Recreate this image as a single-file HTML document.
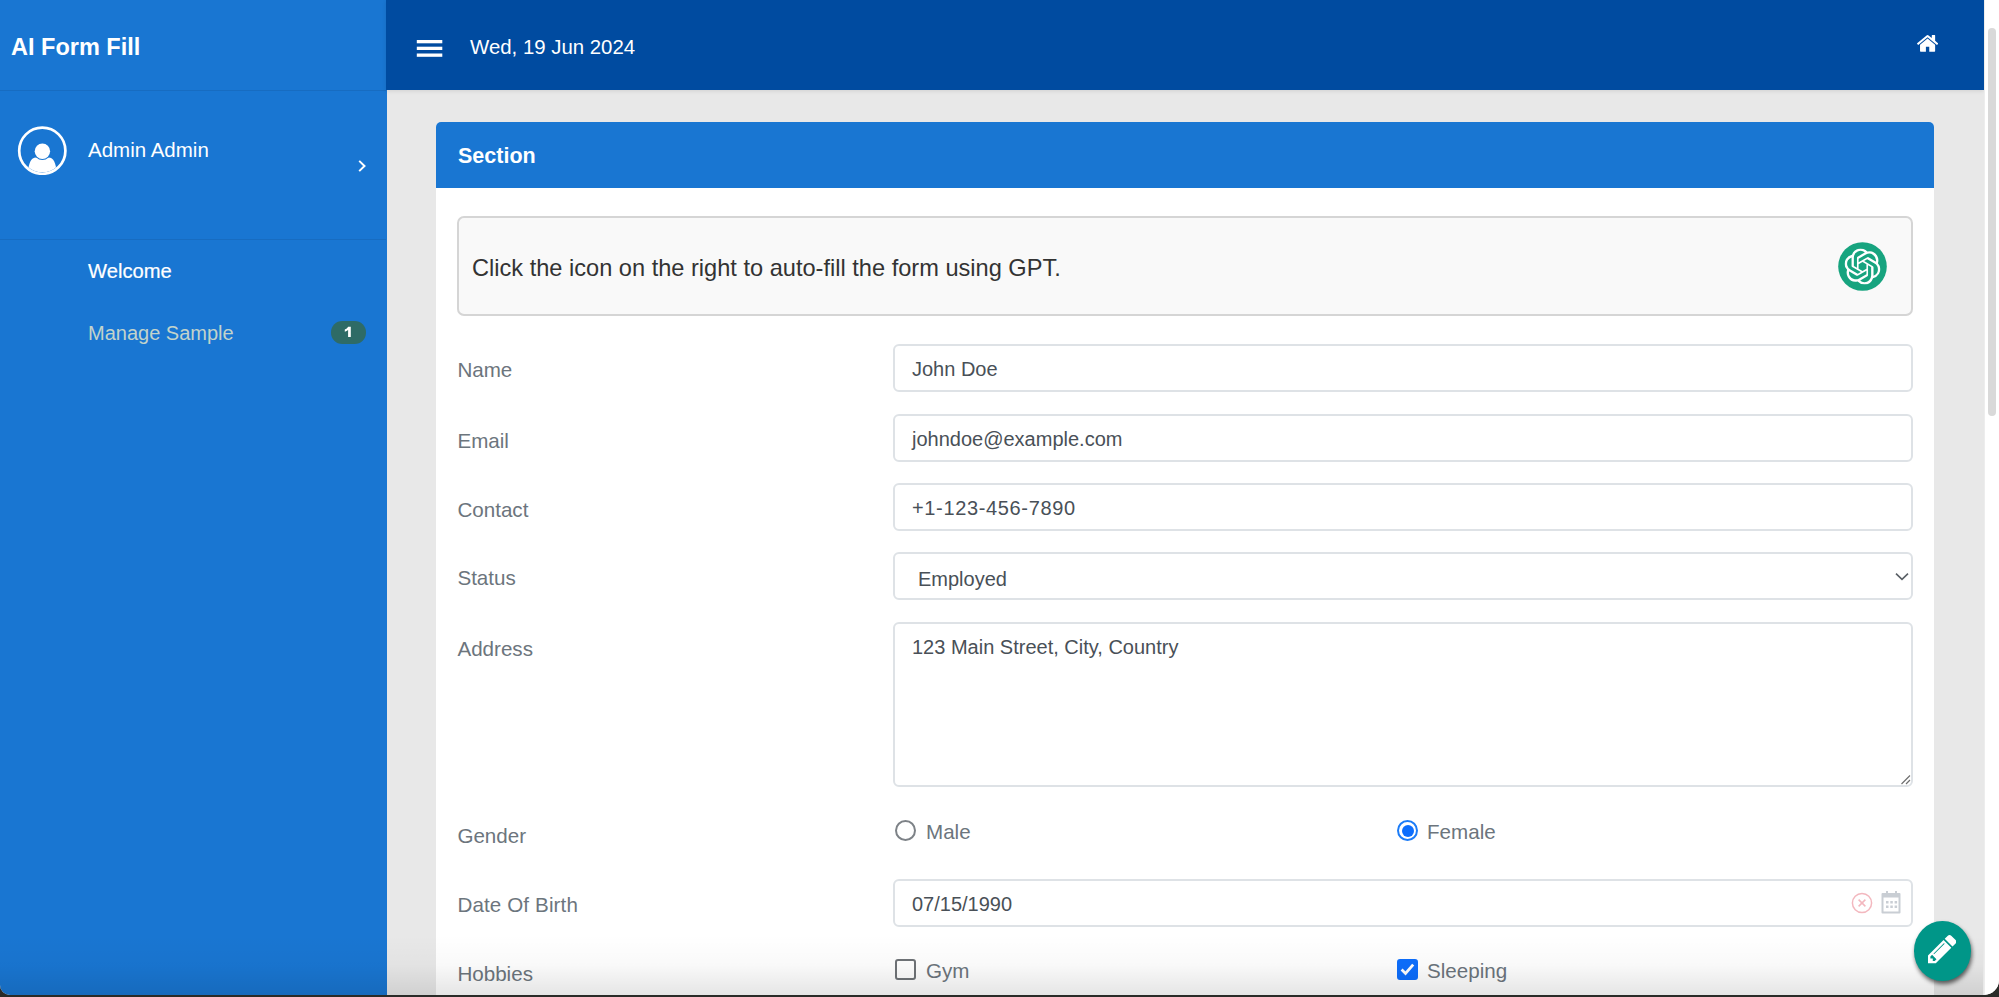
<!DOCTYPE html>
<html><head><meta charset="utf-8">
<style>
*{box-sizing:border-box;margin:0;padding:0}
html,body{width:1999px;height:997px;overflow:hidden;background:#2a2b28;font-family:"Liberation Sans",sans-serif}
#win{position:absolute;left:0;top:0;width:1999px;height:995px;overflow:hidden;border-radius:0 0 15px 10px;background:#e8e8e8}
.t{position:absolute;white-space:nowrap;line-height:1}
#side{position:absolute;left:0;top:0;width:386.5px;height:997px;background:#1976d2;color:#fff}
.sep{position:absolute;left:0;width:386px;height:1px;background:rgba(0,0,0,0.08)}
#top{position:absolute;left:386px;top:0;width:1597.7px;height:90px;background:#004ba0;box-shadow:0 1px 4px rgba(0,0,0,0.1)}
#sb{position:absolute;left:1983.7px;top:0;width:15.3px;height:997px;background:#fff;border-left:1px solid #ededed}
#sb .th{position:absolute;left:3.2px;top:28px;width:8px;height:388px;border-radius:4px;background:#d9d9d9}
#card{position:absolute;left:436px;top:122px;width:1498px;height:900px;background:#fff;border-radius:5px 5px 0 0}
.chead{position:absolute;left:0;top:0;width:1498px;height:66px;background:#1976d2;border-radius:5px 5px 0 0}
.gpt{position:absolute;left:21px;top:94px;width:1456px;height:100px;background:#f9f9f9;border:2px solid #d5d5d5;border-radius:7px}
.lbl{color:#6c757d;font-size:20.6px}
.val{color:#495057;font-size:20px}
.inp{position:absolute;left:457px;width:1020px;height:48px;border:2px solid #dee2e6;border-radius:6px;background:#fff}
.rad{position:absolute;width:21px;height:21px;border-radius:50%;border:2px solid #7d8287;background:#fff}
.rad.on{border:2px solid #1c7cf7}
.rad.on:after{content:"";position:absolute;left:2.5px;top:2.5px;width:12px;height:12px;border-radius:50%;background:#0d6efd}
.chk{position:absolute;width:21px;height:21px;border-radius:3px;border:2px solid #6f7377;background:#fff}
.chk.on{background:#0d6efd;border-color:#0d6efd}
#fab{position:absolute;left:1914px;top:921.4px;width:56.5px;height:59.5px;border-radius:50%;background:#009688;box-shadow:1px 3px 4px rgba(0,0,0,0.6)}
#shade{position:absolute;left:0px;top:935px;width:1983px;height:60px;background:linear-gradient(rgba(0,0,0,0) 0%,rgba(0,0,0,0.025) 50%,rgba(0,0,0,0.1) 100%)}
</style></head><body>
<div id="win">
<div id="side">
  <div class="t" style="left:11px;top:36px;font-size:23.5px;font-weight:bold">AI Form Fill</div>
  <div class="sep" style="top:90px"></div>
  <svg style="position:absolute;left:17px;top:125px" viewBox="0 0 50 50" width="50" height="50">
    <defs><clipPath id="cc"><circle cx="25.3" cy="25.7" r="21.6"/></clipPath></defs>
    <circle cx="25.3" cy="25.7" r="23.1" fill="none" stroke="#fff" stroke-width="2.7"/>
    <g clip-path="url(#cc)">
      <path d="M10.8 48 C11.8 38 13.8 32.8 19.2 32.6 L31.4 32.6 C36.8 32.8 38.8 38 39.8 48Z" fill="#fff"/>
    </g>
    <circle cx="25.4" cy="26.3" r="8.6" fill="#1976d2"/>
    <circle cx="25.4" cy="26.3" r="7.7" fill="#fff"/>
  </svg>
  <div class="t" style="left:88px;top:140px;font-size:20.5px">Admin Admin</div>
  <svg style="position:absolute;left:356.6px;top:159px" width="11" height="14" viewBox="0 0 11 14"><path d="M2.2 1.9 L7.5 7 L2.2 12.1" fill="none" stroke="#fff" stroke-width="2"/></svg>
  <div class="sep" style="top:239px"></div>
  <div class="t" style="left:88px;top:260.5px;font-size:20.2px;-webkit-text-stroke:0.2px #fff">Welcome</div>
  <div class="t" style="left:88px;top:323px;font-size:20px;color:#c2d3cb">Manage Sample</div>
  <div class="t" style="left:331px;top:321px;width:35px;height:22.6px;border-radius:11.3px;background:#2e6b66;"><svg style="position:absolute;left:0;top:0" width="34" height="22" viewBox="0 0 34 22"><path d="M17.2 5.7 H19.8 V16.1 H17.1 V9.1 Q15.7 10.2 13.8 10.8 V8.5 Q16 7.6 17.2 5.7Z" fill="#fff"/></svg></div>
</div>
<div id="top">
  <svg style="position:absolute;left:30px;top:39px" width="27" height="19" viewBox="0 0 27 19"><rect x="0.8" y="1" width="25.5" height="3.3" fill="#fff"/><rect x="0.8" y="7.7" width="25.5" height="3.3" fill="#fff"/><rect x="0.8" y="14.5" width="25.5" height="3.3" fill="#fff"/></svg>
  <div class="t" style="left:84px;top:37px;font-size:20.4px;color:#fff">Wed, 19 Jun 2024</div>
  <svg style="position:absolute;left:1530.7px;top:34.9px" width="21.1" height="16.9" viewBox="25 253 1609 1283"><path fill="#fff" d="M1408 992v480q0 26-19 45t-45 19h-384v-384h-256v384h-384q-26 0-45-19t-19-45v-480q0-1 .5-3t.5-3l575-474 575 474q1 2 1 6zm223-69l-62 74q-8 9-21 11h-3q-13 0-21-7l-692-577-692 577q-12 8-24 7-13-2-21-11l-62-74q-8-10-7-23.5t11-21.5l719-599q32-26 76-26t76 26l244 204v-195q0-14 9-23t23-9h192q14 0 23 9t9 23v408l219 182q10 8 11 21.5t-7 23.5z"/></svg>
</div>
<div id="card">
  <div class="chead"><div class="t" style="left:22px;top:24px;font-size:21.5px;font-weight:bold;color:#fff">Section</div></div>
  <div class="gpt">
    <div class="t" style="left:13px;top:38.6px;font-size:23.6px;color:#333">Click the icon on the right to auto-fill the form using GPT.</div>
    <svg style="position:absolute;left:1379px;top:24px" width="49" height="49" viewBox="0 0 49 49"><circle cx="24.5" cy="24.5" r="24.3" fill="#17a47f"/>
      <svg x="6.5" y="6.5" width="36" height="36" viewBox="0 0 24 24"><path fill="#fff" d="M22.2819 9.8211a5.9847 5.9847 0 0 0-.5157-4.9108 6.0462 6.0462 0 0 0-6.5098-2.9A6.0651 6.0651 0 0 0 4.9807 4.1818a5.9847 5.9847 0 0 0-3.9977 2.9 6.0462 6.0462 0 0 0 .7427 7.0966 5.98 5.98 0 0 0 .511 4.9107 6.051 6.051 0 0 0 6.5146 2.9001A5.9847 5.9847 0 0 0 13.2599 24a6.0557 6.0557 0 0 0 5.7718-4.2058 5.9894 5.9894 0 0 0 3.9977-2.9001 6.0557 6.0557 0 0 0-.7475-7.0729zm-9.022 12.6081a4.4755 4.4755 0 0 1-2.8764-1.0408l.1419-.0804 4.7783-2.7582a.7948.7948 0 0 0 .3927-.6813v-6.7369l2.02 1.1686a.071.071 0 0 1 .038.052v5.5826a4.504 4.504 0 0 1-4.4945 4.4944zm-9.6607-4.1254a4.4708 4.4708 0 0 1-.5346-3.0137l.142.0852 4.783 2.7582a.7712.7712 0 0 0 .7806 0l5.8428-3.3685v2.3324a.0804.0804 0 0 1-.0332.0615L9.74 19.9502a4.4992 4.4992 0 0 1-6.1408-1.6464zM2.3408 7.8956a4.485 4.485 0 0 1 2.3655-1.9728V11.6a.7664.7664 0 0 0 .3879.6765l5.8144 3.3543-2.0201 1.1685a.0757.0757 0 0 1-.071 0l-4.8303-2.7865A4.504 4.504 0 0 1 2.3408 7.872zm16.5963 3.8558L13.1038 8.364 15.1192 7.2a.0757.0757 0 0 1 .071 0l4.8303 2.7913a4.4944 4.4944 0 0 1-.6765 8.1042v-5.6772a.79.79 0 0 0-.407-.667zm2.0107-3.0231l-.142-.0852-4.7735-2.7818a.7759.7759 0 0 0-.7854 0L9.409 9.2297V6.8974a.0662.0662 0 0 1 .0284-.0615l4.8303-2.7866a4.4992 4.4992 0 0 1 6.6802 4.66zM8.3065 12.863l-2.02-1.1638a.0804.0804 0 0 1-.038-.0567V6.0742a4.4992 4.4992 0 0 1 7.3757-3.4537l-.142.0805L8.704 5.459a.7948.7948 0 0 0-.3927.6813zm1.0976-2.3654l2.602-1.4998 2.6069 1.4998v2.9994l-2.5974 1.4997-2.6067-1.4997Z"/></svg>
    </svg>
  </div>
  <div class="t lbl" style="left:21.4px;top:238px">Name</div>
  <div class="inp" style="top:222px"><div class="t val" style="left:17px;top:12.5px">John Doe</div></div>
  <div class="t lbl" style="left:21.4px;top:309px">Email</div>
  <div class="inp" style="top:292px"><div class="t val" style="left:17px;top:13px">johndoe@example.com</div></div>
  <div class="t lbl" style="left:21.4px;top:378px">Contact</div>
  <div class="inp" style="top:361px"><div class="t val" style="left:17px;top:12.5px;letter-spacing:0.65px">+1-123-456-7890</div></div>
  <div class="t lbl" style="left:21.4px;top:446px">Status</div>
  <div class="inp" style="top:430px"><div class="t val" style="left:23px;top:15px">Employed</div>
    <svg style="position:absolute;left:998.5px;top:17px" width="16" height="12" viewBox="0 0 16 12"><path d="M2 2.6 L8 8.4 L14 2.6" fill="none" stroke="#5a6066" stroke-width="1.6"/></svg></div>
  <div class="t lbl" style="left:21.4px;top:517px">Address</div>
  <div class="inp" style="top:500px;height:165px"><div class="t val" style="left:17px;top:12.5px">123 Main Street, City, Country</div>
    <svg style="position:absolute;right:0px;bottom:0px" width="12" height="12" viewBox="0 0 12 12"><path d="M2.5 11 L11 2.5 M7 11 L11 7" stroke="#6f6f6f" stroke-width="1.2"/></svg></div>
  <div class="t lbl" style="left:21.4px;top:704px">Gender</div>
  <div class="rad" style="left:459px;top:698px"></div><div class="t lbl" style="left:490px;top:700px">Male</div>
  <div class="rad on" style="left:961px;top:698px"></div><div class="t lbl" style="left:991px;top:700px">Female</div>
  <div class="t lbl" style="left:21.4px;top:773px;letter-spacing:0.12px">Date Of Birth</div>
  <div class="inp" style="top:757px"><div class="t val" style="left:17px;top:12.5px">07/15/1990</div>
    <svg style="position:absolute;left:956px;top:11px" width="22" height="22" viewBox="0 0 22 22"><circle cx="11" cy="11" r="9.6" fill="none" stroke="#f3b8bf" stroke-width="1.5"/><path d="M7.6 7.6 L14.4 14.4 M14.4 7.6 L7.6 14.4" stroke="#f3b8bf" stroke-width="1.5"/></svg>
    <svg style="position:absolute;left:986px;top:8.5px" width="21" height="24" viewBox="0 0 21 24"><path d="M1.5 4 H18.5 V22.5 H1.5Z" fill="none" stroke="#c9ced4" stroke-width="2" stroke-linejoin="round"/><rect x="1.5" y="4" width="17" height="3.5" fill="#c9ced4"/><rect x="5" y="1" width="2" height="4" fill="#c9ced4"/><rect x="14" y="1" width="2" height="4" fill="#c9ced4"/><g fill="#c9ced4"><rect x="5" y="11" width="2.5" height="2.5"/><rect x="9.3" y="11" width="2.5" height="2.5"/><rect x="13.6" y="11" width="2.5" height="2.5"/><rect x="5" y="15.5" width="2.5" height="2.5"/><rect x="9.3" y="15.5" width="2.5" height="2.5"/><rect x="13.6" y="15.5" width="2.5" height="2.5"/></g></svg></div>
  <div class="t lbl" style="left:21.4px;top:842px">Hobbies</div>
  <div class="chk" style="left:459px;top:837px"></div><div class="t lbl" style="left:490px;top:838.5px">Gym</div>
  <div class="chk on" style="left:961px;top:837px"><svg style="position:absolute;left:0;top:0" width="17" height="17" viewBox="0 0 17 17"><path d="M2.6 8.6 L6.5 12.4 L14.2 3.6" fill="none" stroke="#fff" stroke-width="2.8"/></svg></div><div class="t lbl" style="left:991px;top:838.5px">Sleeping</div>
</div>
<div id="shade"></div>
<div id="sb"><div class="th"></div></div>
<div id="fab"><svg style="position:absolute;left:14px;top:14px" width="28.3" height="28.3" viewBox="0 149 1515 1515"><path fill="#fff" d="M363 1536l91-91-235-235-91 91v107h128v128h107zm523-928q0-22-22-22-10 0-17 7l-542 542q-7 7-7 17 0 22 22 22 10 0 17-7l542-542q7-7 7-17zm-54-192l416 416-832 832h-416v-416zm683 96q0 53-37 90l-166 166-416-416 166-165q36-38 90-38 53 0 91 38l235 234q37 39 37 91z"/></svg></div>
</div>
</body></html>
